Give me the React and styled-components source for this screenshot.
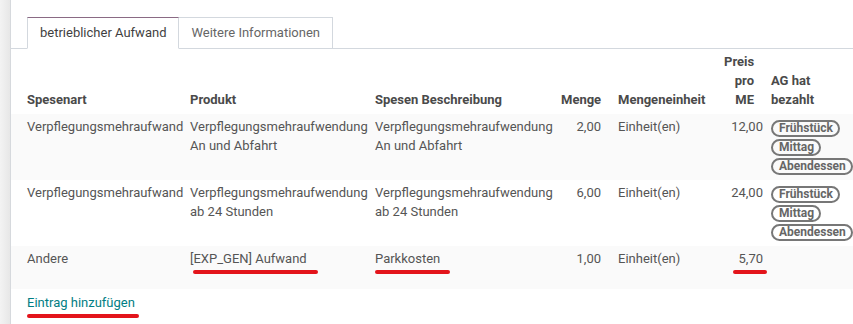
import React from "react";
import styled, { createGlobalStyle } from "styled-components";

const GlobalStyle = createGlobalStyle`
  html, body {
    margin: 0;
    padding: 0;
    background: #fff;
  }
  body {
    font-family: Roboto, "Noto Sans", "Liberation Sans", sans-serif;
    font-size: 13px;
    color: #555;
  }
`;

const rows = [
  {
    type: "Verpflegungsmehraufwand",
    product: ["Verpflegungsmehraufwendung", "An und Abfahrt"],
    desc: ["Verpflegungsmehraufwendung", "An und Abfahrt"],
    qty: "2,00",
    unit: "Einheit(en)",
    price: "12,00",
    tags: ["Frühstück", "Mittag", "Abendessen"],
    striped: true,
  },
  {
    type: "Verpflegungsmehraufwand",
    product: ["Verpflegungsmehraufwendung", "ab 24 Stunden"],
    desc: ["Verpflegungsmehraufwendung", "ab 24 Stunden"],
    qty: "6,00",
    unit: "Einheit(en)",
    price: "24,00",
    tags: ["Frühstück", "Mittag", "Abendessen"],
  },
];

const App = () => {
  return (
    <>
      <GlobalStyle />
      <Page>
        <Sidebar />
        <Main>
          <TabBar>
            <Tab $active>betrieblicher Aufwand</Tab>
            <Tab>Weitere Informationen</Tab>
          </TabBar>
          <Table>
            <colgroup>
              <col style={{ width: 175 }} />
              <col style={{ width: 185 }} />
              <col style={{ width: 186 }} />
              <col style={{ width: 57 }} />
              <col style={{ width: 106 }} />
              <col style={{ width: 47 }} />
              <col style={{ width: 86 }} />
            </colgroup>
            <thead>
              <tr>
                <Th>Spesenart</Th>
                <Th>Produkt</Th>
                <Th>Spesen Beschreibung</Th>
                <Th $num $pr={13}>
                  Menge
                </Th>
                <Th>Mengeneinheit</Th>
                <Th $num $pr={13}>
                  Preis pro ME
                </Th>
                <Th>AG hat bezahlt</Th>
              </tr>
            </thead>
            <tbody>
              {rows.map((r, i) => (
                <Row key={i} $striped={r.striped}>
                  <Td>{r.type}</Td>
                  <Td>
                    {r.product[0]}
                    <br />
                    {r.product[1]}
                  </Td>
                  <Td>
                    {r.desc[0]}
                    <br />
                    {r.desc[1]}
                  </Td>
                  <Td $num $pr={13}>
                    {r.qty}
                  </Td>
                  <Td>{r.unit}</Td>
                  <Td $num>{r.price}</Td>
                  <TagCell>
                    <TagList>
                      {r.tags.map((t) => (
                        <Tag key={t}>{t}</Tag>
                      ))}
                    </TagList>
                  </TagCell>
                </Row>
              ))}
              <Row $striped $height={43}>
                <Td>Andere</Td>
                <Td>
                  <Marked $left={3} $right={-11}>
                    [EXP_GEN] Aufwand
                  </Marked>
                </Td>
                <Td>
                  <Marked $left={0} $right={-10}>
                    Parkkosten
                  </Marked>
                </Td>
                <Td $num $pr={13}>
                  1,00
                </Td>
                <Td>Einheit(en)</Td>
                <Td $num>
                  <Marked $left={-6} $right={-4}>
                    5,70
                  </Marked>
                </Td>
                <Td />
              </Row>
              <tr>
                <AddCell colSpan={7}>
                  <AddLink href="#">
                    <Marked $left={0} $right={-4}>
                      Eintrag hinzufügen
                    </Marked>
                  </AddLink>
                </AddCell>
              </tr>
            </tbody>
          </Table>
        </Main>
      </Page>
    </>
  );
};

export default App;

const Page = styled.div`
  display: flex;
  width: 853px;
  height: 324px;
  overflow: hidden;
`;

const Sidebar = styled.div`
  flex: 0 0 10px;
  background: linear-gradient(to right, #f3f3f3, #e7e7e7);
  border-right: 1px solid #d6d9dd;
`;

const Main = styled.div`
  flex: 1;
  min-width: 0;
`;

const TabBar = styled.div`
  display: flex;
  padding: 17px 0 0 16px;
  border-bottom: 1px solid #d3d8de;
`;

const Tab = styled.div`
  height: 30px;
  line-height: 30px;
  padding: 0 12px;
  margin-bottom: -1px;
  color: ${(p) => (p.$active ? "#3f3f3f" : "#666")};
  background: #fff;
  border: 1px solid #d3d8de;
  border-top-color: ${(p) => (p.$active ? "#8a6a84" : "#d3d8de")};
  border-bottom-color: ${(p) => (p.$active ? "#fff" : "#d3d8de")};
  & + & {
    border-left: none;
  }
`;

const Table = styled.table`
  width: 842px;
  table-layout: fixed;
  border-collapse: collapse;
  line-height: 19px;
`;

const Th = styled.th`
  padding: 3px ${(p) => p.$pr || 4}px 5px 4px;
  &:first-child {
    padding-left: 16px;
  }
  vertical-align: bottom;
  font-weight: 700;
  color: #4a4a4a;
  text-align: ${(p) => (p.$num ? "right" : "left")};
`;

const Row = styled.tr`
  background: ${(p) => (p.$striped ? "#fafafa" : "#fff")};
  ${(p) => (p.$height ? `height: ${p.$height}px;` : "")}
`;

const Td = styled.td`
  padding: 3px ${(p) => p.$pr || 4}px 5px 4px;
  &:first-child {
    padding-left: 16px;
  }
  vertical-align: top;
  white-space: nowrap;
  text-align: ${(p) => (p.$num ? "right" : "left")};
`;

const TagCell = styled(Td)`
  padding-top: 6px;
`;

const TagList = styled.div`
  display: flex;
  flex-direction: column;
  align-items: flex-start;
  gap: 2px;
`;

const Tag = styled.span`
  display: inline-block;
  height: 13px;
  line-height: 13px;
  padding: 0 5px 0 6px;
  border: 2px solid #777;
  border-radius: 9px;
  font-size: 12px;
  font-weight: 700;
  color: #666;
`;

const Marked = styled.span`
  position: relative;
  display: inline-block;
  &::after {
    content: "";
    position: absolute;
    left: ${(p) => p.$left}px;
    right: ${(p) => p.$right}px;
    top: 21px;
    height: 4px;
    border-radius: 2px;
    background: #e3141b;
  }
`;

const AddCell = styled.td`
  padding: 4px 4px 0 16px;
`;

const AddLink = styled.a`
  color: #017e84;
  text-decoration: none;
`;
